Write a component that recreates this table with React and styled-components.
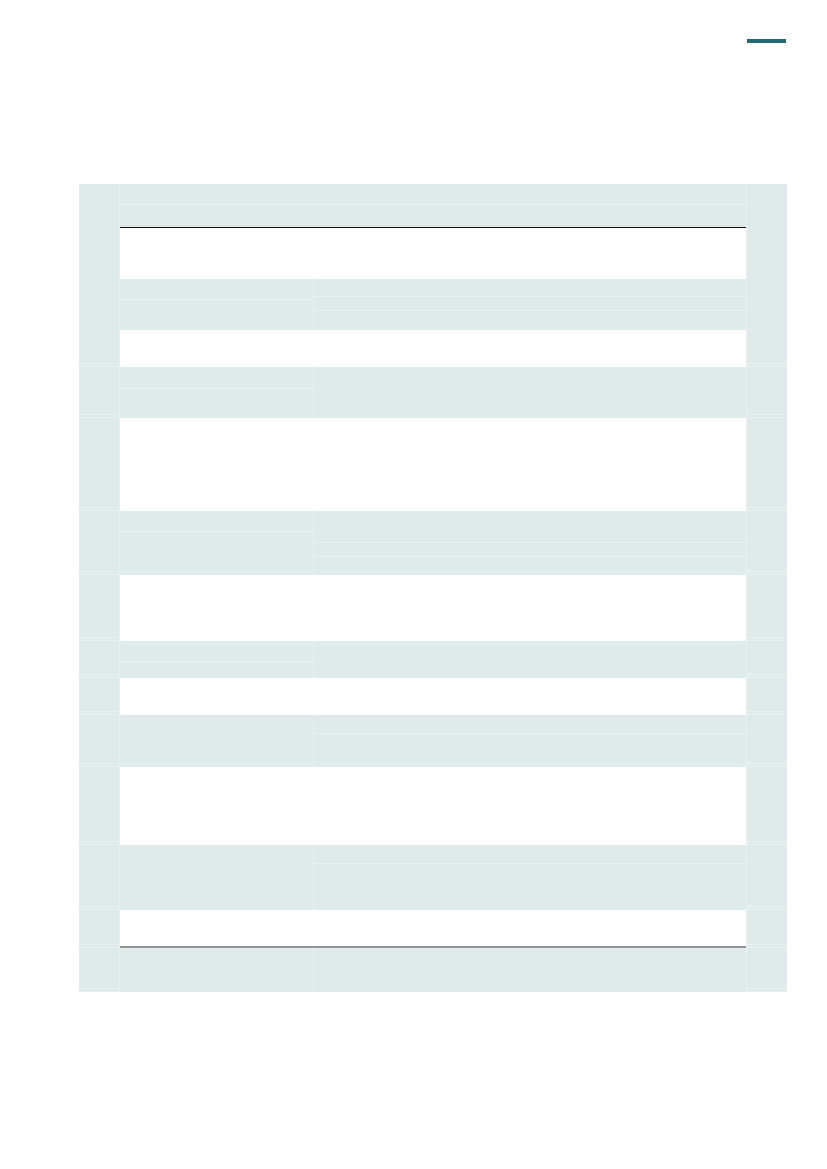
import styled, { createGlobalStyle } from 'styled-components'

const GlobalStyle = createGlobalStyle`
  html, body {
    margin: 0;
    padding: 0;
    background: #fff;
    font-family: "Liberation Sans", Arial, sans-serif;
  }
`

const TEAL = '#dfebeb'
const LINE = '#e9f1f1'

// each band: left/right sub-row heights; white bands have no split
const bands = [
  { type: 'white', h: 93 },
  { type: 'split', left: [21, 43], right: [32, 14, 18] },
  { type: 'white', h: 66 },
  { type: 'split', left: [21, 16], right: [37] },
  { type: 'white', h: 37 },
  { type: 'split', left: [52], right: [19, 33] },
  { type: 'white', h: 78 },
  { type: 'split', left: [65], right: [19, 46] },
  { type: 'white', h: 38, rule: true },
  { type: 'split', left: [44], right: [44] },
]

const SplitBlock = ({ left, right }) => (
  <Split>
    <Column>
      {left.map((h, i) => <SubCell key={i} $h={h} $last={i === left.length - 1} />)}
    </Column>
    <Column $divider>
      {right.map((h, i) => <SubCell key={i} $h={h} $last={i === right.length - 1} />)}
    </Column>
  </Split>
)

const App = () => {
  return (
    <>
      <GlobalStyle />
      <Page>
        <TopBar>
          <Accent />
        </TopBar>

        <Sheet>
          <Band>
            <Gutter />
            <Content>
              <TealRow $h={21} />
              <TealRow $h={23} $rule />
              <WhiteCell $h={51} />
              <SplitBlock left={[21, 30]} right={[18, 14, 19]} />
              <WhiteCell $h={37} />
            </Content>
            <Gutter $right />
          </Band>

          <Band>
            <Gutter />
            <Content>
              <SplitBlock left={[22, 29]} right={[51]} />
            </Content>
            <Gutter $right />
          </Band>

          {bands.map((b, i) => (
            <Band key={i}>
              <Gutter />
              <Content>
                {b.type === 'white'
                  ? <WhiteCell $h={b.h} $rule={b.rule} />
                  : <SplitBlock left={b.left} right={b.right} />}
              </Content>
              <Gutter $right />
            </Band>
          ))}
        </Sheet>
      </Page>
    </>
  )
}

export default App

const Page = styled.div`
  width: 827px;
  min-height: 1169px;
  background: #fff;
`

const TopBar = styled.div`
  display: flex;
  justify-content: flex-end;
  padding: 39px 41px 0 0;
  height: 4px;
`

const Accent = styled.div`
  width: 39px;
  height: 4px;
  background: #236a72;
`

const Sheet = styled.div`
  width: 708px;
  margin: 141px 0 0 79px;
  display: flex;
  flex-direction: column;
`

const Band = styled.div`
  display: grid;
  grid-template-columns: 41px 626px 41px;
`

const Gutter = styled.div`
  background: ${TEAL};
  box-sizing: border-box;
  border-bottom: 1px solid ${LINE};
  ${p => p.$right
    ? `border-left: 1px solid ${LINE};`
    : `border-right: 1px solid ${LINE};`}
  box-shadow: inset 0 -2px 0 ${TEAL}, inset 0 -3px 0 ${LINE};
`

const Content = styled.div`
  display: flex;
  flex-direction: column;
`

const TealRow = styled.div`
  box-sizing: border-box;
  height: ${p => p.$h}px;
  background: ${TEAL};
  border-bottom: ${p => (p.$rule ? '1.5px solid #111' : `1px solid ${LINE}`)};
`

const WhiteCell = styled.div`
  box-sizing: border-box;
  height: ${p => p.$h}px;
  background: #fff;
  ${p => p.$rule && 'border-bottom: 2px solid #939393;'}
`

const Split = styled.div`
  display: grid;
  grid-template-columns: 193px 433px;
  background: ${TEAL};
`

const Column = styled.div`
  display: flex;
  flex-direction: column;
  ${p => p.$divider && `border-left: 1px solid ${LINE};`}
`

const SubCell = styled.div`
  box-sizing: border-box;
  height: ${p => p.$h}px;
  background: ${TEAL};
  ${p => !p.$last && `border-bottom: 1px solid ${LINE};`}
`
